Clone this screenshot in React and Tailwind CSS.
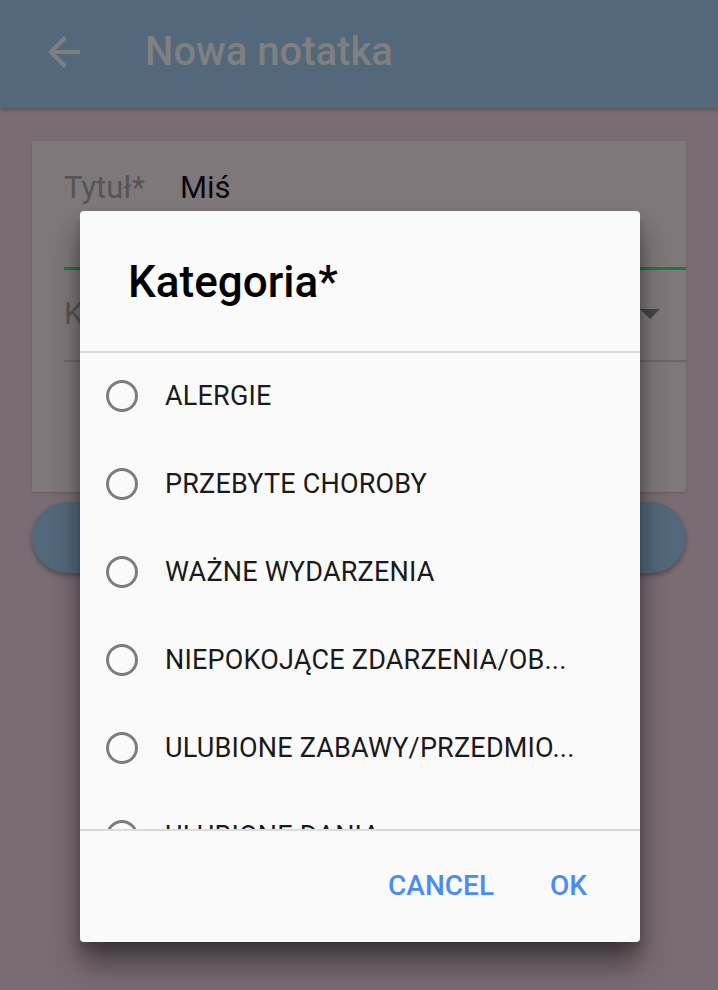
import React from "react";

const items = [
  "ALERGIE",
  "PRZEBYTE CHOROBY",
  "WAŻNE WYDARZENIA",
  "NIEPOKOJĄCE ZDARZENIA/OB...",
  "ULUBIONE ZABAWY/PRZEDMIO...",
  "ULUBIONE DANIA",
];

export default function App() {
  return (
    <div
      className="relative w-[718px] h-[990px] overflow-hidden bg-[#7a6c73]"
      style={{ fontFamily: "Roboto, 'Noto Sans', sans-serif" }}
    >
      {/* App bar */}
      <header className="relative z-10 h-[108px] bg-[#53687a] flex items-center shadow-[0_2px_4px_rgba(0,0,0,0.25)]">
        <svg
          className="ml-[40px] w-[48px] h-[48px] mt-[-4px]"
          viewBox="0 0 24 24"
          fill="#808080"
        >
          <path d="M20 11H7.83l5.59-5.59L12 4l-8 8 8 8 1.41-1.41L7.83 13H20v-2z" />
        </svg>
        <h1 className="ml-[57px] mt-[-4px] text-[40px] font-medium text-[#808080]">
          Nowa notatka
        </h1>
      </header>

      {/* Form card */}
      <div className="mx-[32px] mt-[33px] h-[351px] bg-[#7f787b] shadow-[0_1px_2px_rgba(0,0,0,0.2)] pl-[32px] flex flex-col">
        <div className="h-[129px] flex flex-col justify-end border-b-[3px] border-[#1e7a3c]">
          <div className="flex items-baseline pb-[56px]">
            <span className="text-[31px] text-[#555555] w-[116px]">Tytuł*</span>
            <span className="text-[31px] text-[#0a0a0a]">Miś</span>
          </div>
        </div>
        <div className="h-[92px] flex items-center justify-between border-b-2 border-[#6b6668]">
          <span className="text-[31px] text-[#555555] mt-[-2px]">Kategoria*</span>
          <svg className="w-[20px] h-[10px] mr-[26px] mt-[-2px]" viewBox="0 0 20 10">
            <path d="M0 0h20L10 10z" fill="#464646" />
          </svg>
        </div>
      </div>

      {/* Button */}
      <div className="mx-[32px] mt-[10px] h-[71px] rounded-full bg-[#53687a] shadow-[0_3px_5px_rgba(0,0,0,0.3)]" />

      {/* Dialog */}
      <div className="absolute left-[80px] top-[211px] w-[560px] h-[731px] bg-[#fafafa] rounded-[4px] shadow-[0_22px_30px_rgba(0,0,0,0.42),0_8px_12px_rgba(0,0,0,0.2)] flex flex-col overflow-hidden">
        <div className="h-[142px] shrink-0 border-b-2 border-[#dcdcdc] pl-[48px] pt-[41px]">
          <h2 className="text-[44px] font-medium text-[#000000] leading-[60px]">
            Kategoria*
          </h2>
        </div>
        <div className="h-[476px] shrink-0 overflow-hidden">
          {items.map((t) => (
            <div key={t} className="h-[88px] flex items-center">
              <div className="ml-[26px] mt-[-2px] w-[32px] h-[32px] rounded-full border-[3.5px] border-[#7d7d7d] shrink-0" />
              <span className="ml-[27px] mt-[-2px] text-[27px] tracking-[0.2px] text-[#1a1a1a] whitespace-nowrap">
                {t}
              </span>
            </div>
          ))}
        </div>
        <div className="flex-1 border-t-2 border-[#dcdcdc] flex items-center justify-end pr-[53px] pb-[2px]">
          <span className="text-[28px] font-medium text-[#4a8cf5] mr-[56px]">CANCEL</span>
          <span className="text-[28px] font-medium text-[#4a8cf5]">OK</span>
        </div>
      </div>
    </div>
  );
}
